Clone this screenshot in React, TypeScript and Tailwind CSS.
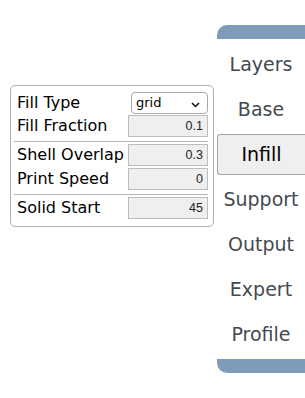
import React from "react";

const inputCls =
  "w-[80px] h-[22px] bg-[#efefef] border border-[#bcbcbc] text-right pr-[4px] text-[12.5px] text-[#222] outline-none";

function Row({ label, value }: { label: string; value: string }) {
  return (
    <div className="flex items-center justify-between pl-[6px] pr-[5px]">
      <span className="text-[16px] text-black leading-none">{label}</span>
      <input
        className={inputCls}
        style={{ fontFamily: "'Liberation Sans', Arial, sans-serif" }}
        defaultValue={value}
        readOnly
      />
    </div>
  );
}

function Sep() {
  return <div className="h-px bg-[#b4b4b4] ml-[3px] mr-[5px] mt-[4px] mb-[2px]" />;
}

const items = ["Layers", "Base", "Infill", "Support", "Output", "Expert", "Profile"];

export default function App() {
  return (
    <div
      className="flex items-start w-[305px] h-[398px] bg-white overflow-hidden pl-[10px]"
      style={{ fontFamily: "'DejaVu Sans', sans-serif" }}
    >
      <div className="mt-[85px] w-[204px] shrink-0 border border-[#b0b0b0] rounded-[5px] pt-[6px] pb-[7px] flex flex-col">
        <div className="flex items-center justify-between pl-[6px] pr-[5px] mb-[1px]">
          <span className="text-[16px] text-black leading-none">Fill Type</span>
          <div className="relative w-[77px] h-[22px] bg-white border border-[#a8a8a8] rounded-[4px] flex items-center pl-[4px] text-[13px] text-black">
            grid
            <svg
              className="absolute right-[7px] top-[9px]"
              width="9"
              height="6"
              viewBox="0 0 9 6"
            >
              <path d="M1 1 L4.5 4.5 L8 1" fill="none" stroke="#111" strokeWidth="1.5" />
            </svg>
          </div>
        </div>
        <Row label="Fill Fraction" value="0.1" />
        <Sep />
        <div className="flex flex-col gap-[2px]">
          <Row label="Shell Overlap" value="0.3" />
          <Row label="Print Speed" value="0" />
        </div>
        <Sep />
        <Row label="Solid Start" value="45" />
      </div>

      <div className="ml-[3px] mt-[25px] flex-1 flex flex-col">
        <div className="h-[14px] bg-[#7f9bb9] rounded-tl-[10px]" />
        <div className="mt-[3px] flex flex-col">
          {items.map((it) => (
            <div key={it} className="py-[2px]">
              {it === "Infill" ? (
                <div className="h-[41px] flex items-center justify-center bg-[#efefef] border border-r-0 border-[#a6a6a6] rounded-l-[3px] text-[19px] text-black">
                  {it}
                </div>
              ) : (
                <div className="h-[41px] flex items-center justify-center text-[19px] text-[#444a50]">
                  {it}
                </div>
              )}
            </div>
          ))}
        </div>
        <div className="mt-[2px] h-[14px] bg-[#7f9bb9] rounded-bl-[10px]" />
      </div>
    </div>
  );
}
